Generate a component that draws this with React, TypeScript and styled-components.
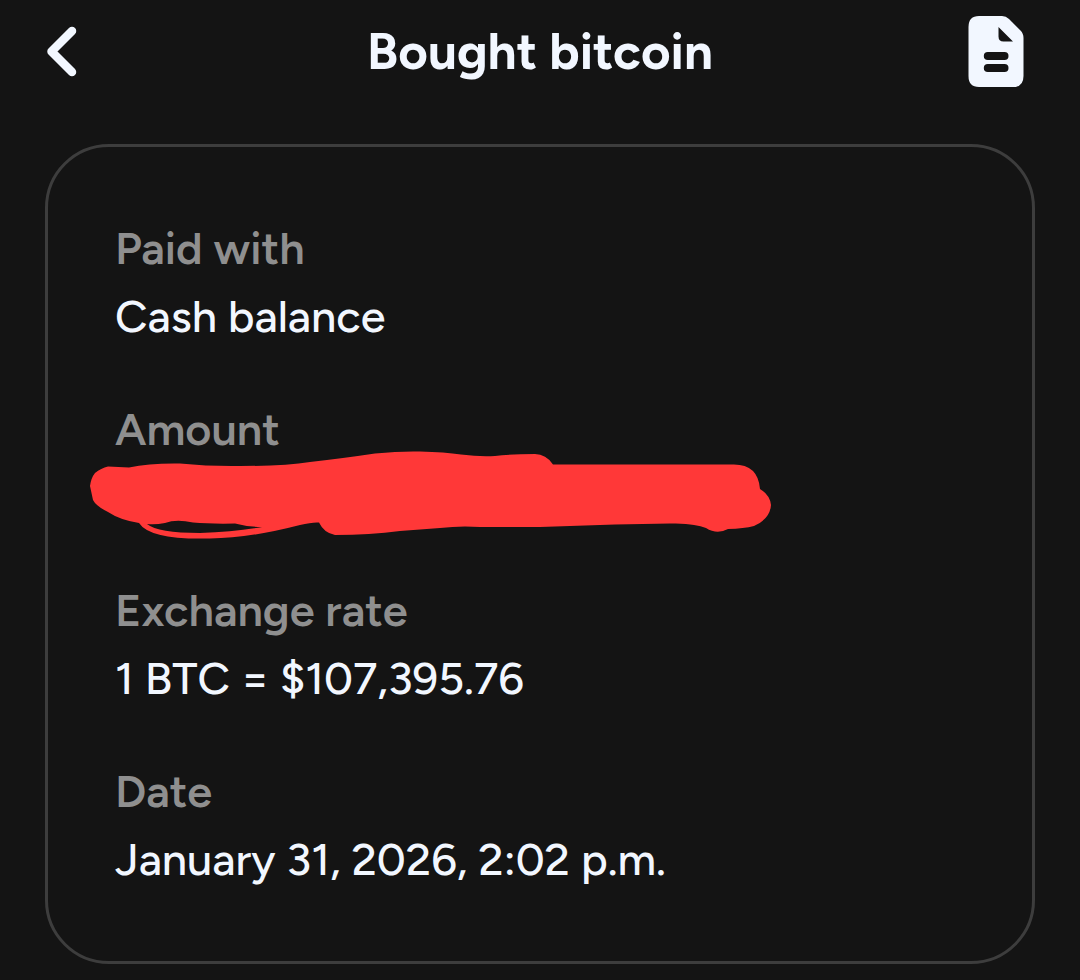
import React from "react";
import styled, { createGlobalStyle } from "styled-components";

const GlobalStyle = createGlobalStyle`
  * {
    box-sizing: border-box;
  }
  body {
    margin: 0;
    background: #141414;
    color: #f2f7ff;
    font-family: Figtree, Lato, sans-serif;
  }
`;

const Page = styled.div`
  padding: 0 45px 16px;
`;

const Header = styled.header`
  display: grid;
  grid-template-columns: 80px 1fr 80px;
  align-items: center;
  height: 104px;
  margin-bottom: 40px;
`;

const Title = styled.h1`
  margin: 0;
  font-size: 51px;
  line-height: 60px;
  font-weight: 700;
  text-align: center;
`;

const IconButton = styled.button<{ $align: "start" | "end" }>`
  display: flex;
  justify-content: ${(p) => p.$align};
  align-items: center;
  width: 80px;
  height: 104px;
  padding: 0 ${(p) => (p.$align === "end" ? "11px" : "0")} 0 0;
  border: 0;
  background: none;
  color: inherit;
  cursor: pointer;
`;

const Card = styled.dl`
  display: flex;
  flex-direction: column;
  gap: 53px;
  margin: 0;
  padding: 71px 67px 72px;
  border: 3px solid #3d3d3d;
  border-radius: 64px;
`;

const Detail = styled.div`
  display: flex;
  flex-direction: column;
  gap: 8px;
`;

const Label = styled.dt`
  color: #8f8f8f;
  font-size: 45px;
  line-height: 60px;
  font-weight: 600;
`;

const Value = styled.dd`
  position: relative;
  min-height: 60px;
  margin: 0;
  font-size: 45px;
  line-height: 60px;
  font-weight: 500;
`;

const Scribble = styled.svg`
  position: absolute;
  top: -19px;
  left: -29px;
  display: block;
`;

function BackIcon() {
  return (
    <svg width="34" height="54" viewBox="45 25 34 54" fill="none" aria-hidden="true">
      <path
        d="M72 31 L51.500 51.500 L72 72"
        stroke="currentColor"
        strokeWidth="8.500"
        strokeLinecap="round"
        strokeLinejoin="round"
      />
    </svg>
  );
}

function ReceiptIcon() {
  return (
    <svg width="56" height="72" viewBox="968 16 56 72" aria-hidden="true">
      <path
        fill="currentColor"
        fillRule="evenodd"
        d="M979 16 H1002 Q1006 16 1009 19 L1020.500 30.500 Q1023.500 33.500 1023.500 38 V76 Q1023.500 87 1013 87 H979 Q968.500 87 968.500 76 V27 Q968.500 16 979 16 Z
        M998.500 27 V36.500 Q998.500 41.500 1003.500 41.500 H1013 Z
        M987.800 52 A4 4 0 0 0 987.800 60 H1004.500 A4 4 0 0 0 1004.500 52 Z
        M987.800 64 A4 4 0 0 0 987.800 72 H1004.500 A4 4 0 0 0 1004.500 64 Z"
      />
    </svg>
  );
}

function Redaction() {
  return (
    <Scribble width="686" height="94" viewBox="86 448 686 94" role="img" aria-label="Amount hidden">
      <path
        fill="#ff3838"
        fillRule="evenodd"
        d="M90 486 Q91 478 95 473 Q101 468 108 466.500 L129 467.500 Q150 463 180 463.500 Q210 466.500 240 466 Q285 466 310 462 Q345 458 375 453.500 Q400 451 420 451.500 Q445 452 461 454.500 Q480 457 495 456 Q510 454 535 454 Q546 454 553 464.500 H733 Q758 464 760 489 Q770 495 771 505 Q770 519 754 526 Q744 528.500 728 529 Q717 535 706 528 Q701 526 694 525 Q685 523 670 523.500 L615 524.500 L540 527 H480 Q460 525.500 440 528 L400 531 Q370 535 335 535 Q324 533 319 522.500 Q312 522 300 525 Q250 538 210 538.500 Q150 540 139 523 Q120 520 108 512 Q96 506 93 500 Z
        M147 524 Q158 533 200 533 Q235 532 262 527 Q248 527 235 523.500 Q210 524 193 522.500 Q176 519 165 523 Q155 525 147 524 Z"
      />
    </Scribble>
  );
}

const details = [
  { label: "Paid with", value: "Cash balance" },
  { label: "Amount", value: <Redaction /> },
  { label: "Exchange rate", value: "1 BTC = $107,395.76" },
  { label: "Date", value: "January 31, 2026, 2:02 p.m." },
];

export default function App() {
  return (
    <Page>
      <GlobalStyle />
      <Header>
        <IconButton $align="start" type="button" aria-label="Back">
          <BackIcon />
        </IconButton>
        <Title>Bought bitcoin</Title>
        <IconButton $align="end" type="button" aria-label="View receipt">
          <ReceiptIcon />
        </IconButton>
      </Header>
      <main>
        <Card>
          {details.map(({ label, value }) => (
            <Detail key={label}>
              <Label>{label}</Label>
              <Value>{value}</Value>
            </Detail>
          ))}
        </Card>
      </main>
    </Page>
  );
}
